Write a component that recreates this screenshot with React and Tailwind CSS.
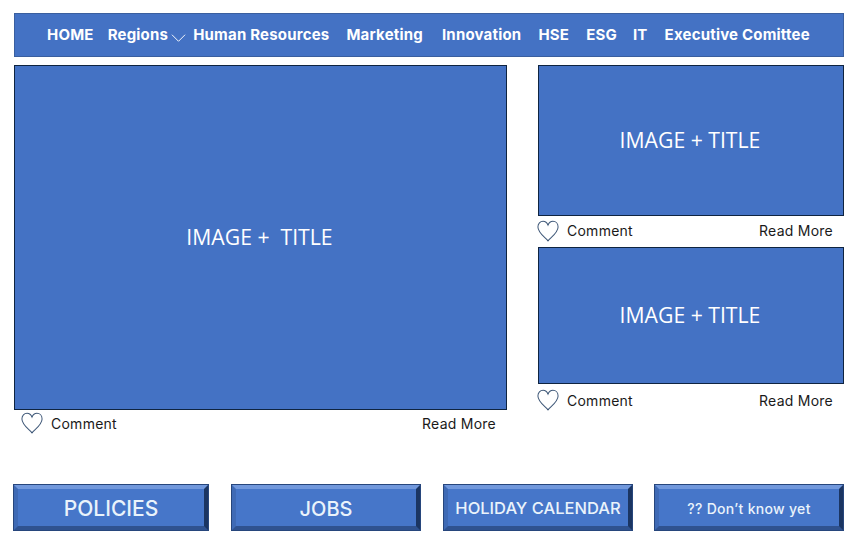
import React from "react";

const Heart = () => (
  <svg width="22" height="22" viewBox="0 0 24 24" fill="none" stroke="#3f5878" strokeWidth="1.1" className="shrink-0">
    <path d="M12 22.8 C9.5 19.5 1 14 1 7.6 C1 3.8 3.5 1.4 6.6 1.4 C9 1.4 11 3 12 5.6 C13 3 15 1.4 17.4 1.4 C20.5 1.4 23 3.8 23 7.6 C23 14 14.5 19.5 12 22.8 Z" />
  </svg>
);

// blue image placeholder with the thin dark outline
const ImageBox = ({ className, title }) => (
  <div className={`flex items-center justify-center bg-[#4472c4] border border-[#0f2440] pb-[2px] pr-[2px] text-white text-[21.2px] font-['Open_Sans',sans-serif] whitespace-pre ${className}`}>
    {title}
  </div>
);

const Actions = ({ className }) => (
  <div className={`flex items-center pb-[2px] font-['Inter',sans-serif] text-[14px] tracking-[0.25px] text-[#1a1a1a] ${className}`}>
    <Heart />
    <span className="ml-[8px]">Comment</span>
    <span className="ml-auto">Read More</span>
  </div>
);

const BevelButton = ({ label, className }) => (
  <button className={`h-[47px] border border-[#27467c] font-['Inter',sans-serif] font-medium text-[#eaf3fb] ${className}`}>
    <span className="h-full flex items-center justify-center pt-[2px] bg-[#4676c9] border-[4px] border-t-[#7198dc] border-l-[#3f6ab5] border-r-[#1b3562] border-b-[#2f5290]">
      {label}
    </span>
  </button>
);

export default function App() {
  return (
    <div className="w-[855px] h-[539px] bg-white overflow-hidden pt-[13px] pl-[14px] pr-[11px]">
      <nav className="h-[44px] flex items-center bg-[#4472c4] border border-[#3a5f9f] text-white text-[15px] font-bold font-['Inter',sans-serif] tracking-[0.2px] pl-[32px] whitespace-nowrap">
        <a>HOME</a>
        <a className="ml-[14px]">Regions</a>
        <svg width="15" height="10" viewBox="0 0 16 10" fill="none" stroke="white" strokeWidth="1" className="ml-[3px] mt-[5px]">
          <path d="M1 1.5 L8 8.5 L15 1.5" />
        </svg>
        <a className="ml-[7px]">Human Resources</a>
        <a className="ml-[17px]">Marketing</a>
        <a className="ml-[19px]">Innovation</a>
        <a className="ml-[17px]">HSE</a>
        <a className="ml-[17px]">ESG</a>
        <a className="ml-[16px]">IT</a>
        <a className="ml-[17px]">Executive Comittee</a>
      </nav>

      <div className="flex mt-[8px]">
        <div className="w-[493px]">
          <ImageBox className="h-[345px]" title="IMAGE +  TITLE" />
          <Actions className="h-[28px] pl-[7px] pr-[11px]" />
        </div>
        <div className="w-[306px] ml-[31px]">
          <ImageBox className="h-[151px]" title="IMAGE + TITLE" />
          <Actions className="h-[31px] -ml-px pr-[11px]" />
          <ImageBox className="h-[137px]" title="IMAGE + TITLE" />
          <Actions className="h-[34px] -ml-px pr-[11px]" />
        </div>
      </div>

      <div className="flex mt-[46px] -ml-px">
        <BevelButton className="w-[196px] text-[21px]" label="POLICIES" />
        <BevelButton className="w-[190px] ml-[22px] text-[20px]" label="JOBS" />
        <BevelButton className="w-[190px] ml-[22px] text-[16.5px]" label="HOLIDAY CALENDAR" />
        <BevelButton className="w-[190px] ml-[21px] text-[14px] tracking-[0.3px]" label="?? Don’t know yet" />
      </div>
    </div>
  );
}
